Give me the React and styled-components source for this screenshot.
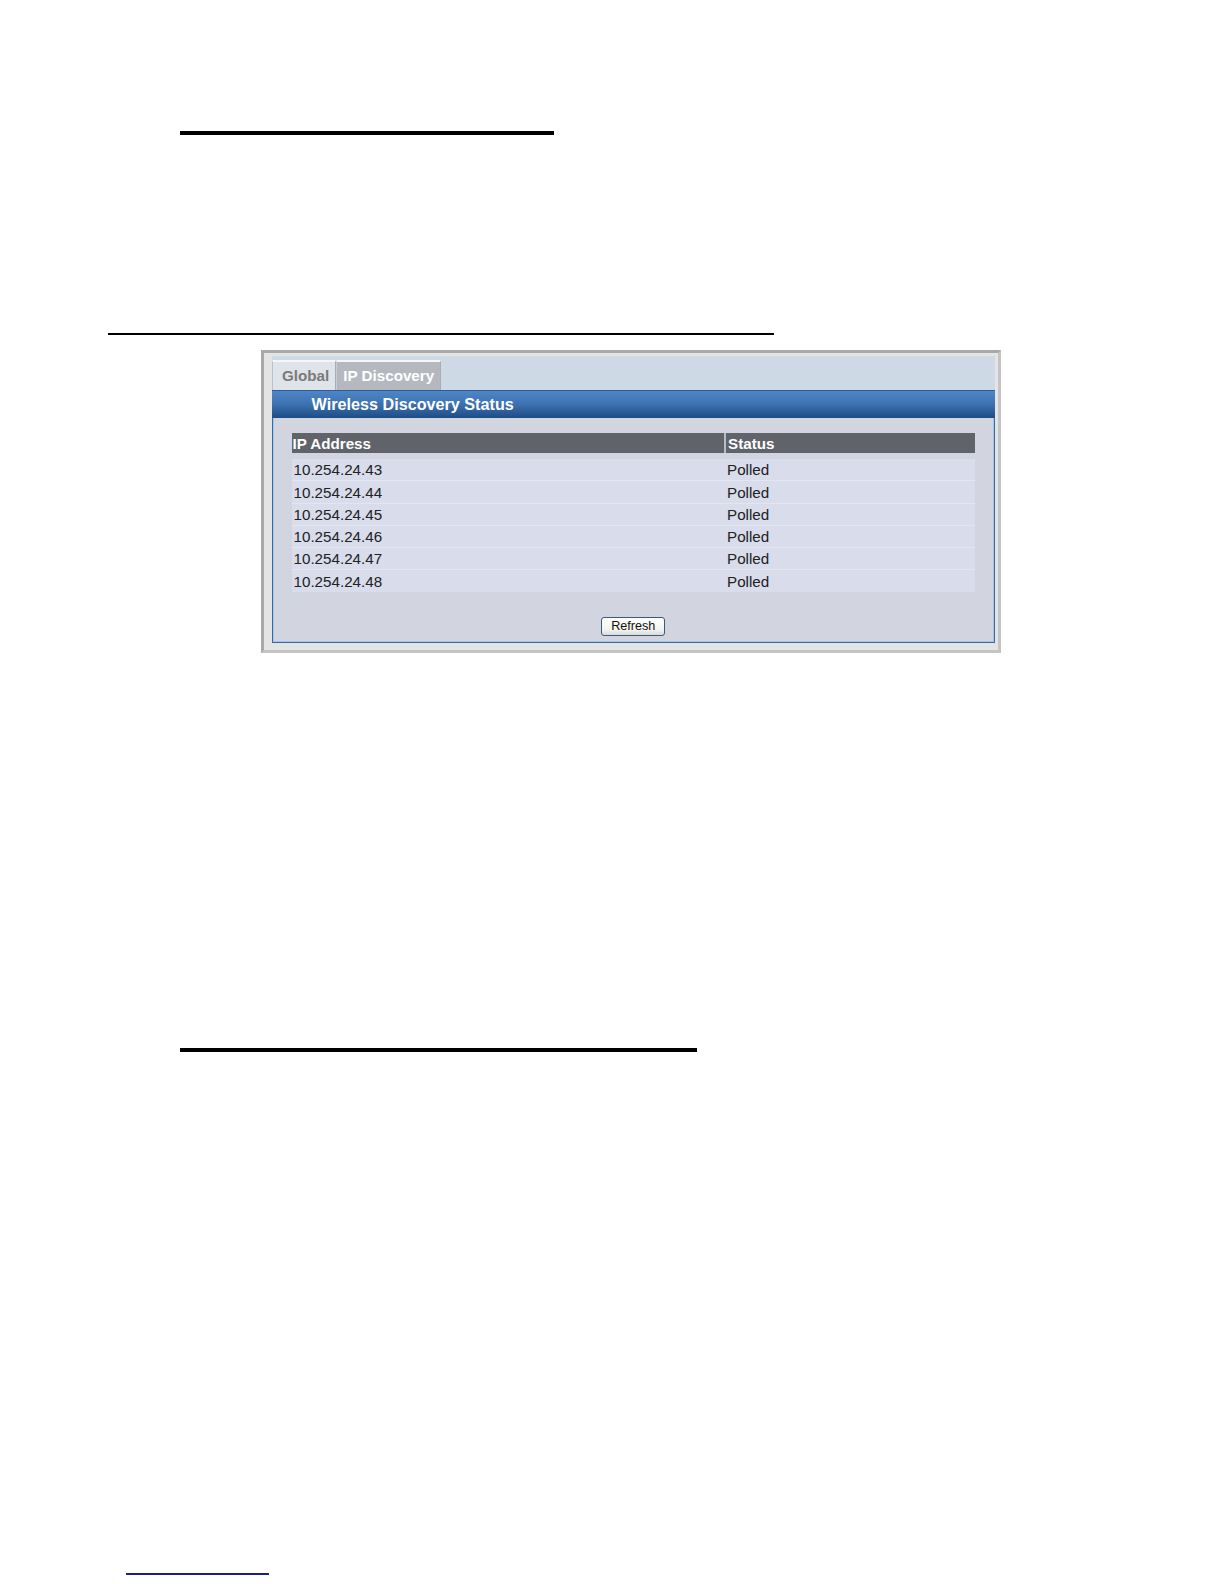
import styled, { createGlobalStyle } from "styled-components";

const rows = [
  { ip: "10.254.24.43", status: "Polled" },
  { ip: "10.254.24.44", status: "Polled" },
  { ip: "10.254.24.45", status: "Polled" },
  { ip: "10.254.24.46", status: "Polled" },
  { ip: "10.254.24.47", status: "Polled" },
  { ip: "10.254.24.48", status: "Polled" },
];

export default function App() {
  return (
    <Page>
      <GlobalStyle />
      <Rule $top={131} $left={180} $width={374} $height={4} />
      <Rule $top={198} $left={108} $width={666} $height={1.5} />
      <Frame>
        <TabBar>
          <Tab>Global</Tab>
          <Tab $active>IP Discovery</Tab>
        </TabBar>
        <Header>Wireless Discovery Status</Header>
        <Body>
          <Table>
            <HeadRow>
              <HeadCell $first>IP Address</HeadCell>
              <HeadCell>Status</HeadCell>
            </HeadRow>
            <Rows>
              {rows.map((r) => (
                <Row key={r.ip}>
                  <Cell $first>{r.ip}</Cell>
                  <Cell>{r.status}</Cell>
                </Row>
              ))}
            </Rows>
          </Table>
          <ButtonBar>
            <Button>Refresh</Button>
          </ButtonBar>
        </Body>
      </Frame>
      <Rule $top={395} $left={180} $width={517} $height={4} />
      <Rule $top={521.5} $left={126} $width={143} $height={2} $color="#1c1c8c" />
    </Page>
  );
}

const GlobalStyle = createGlobalStyle`
html, body{
  margin: 0;
  background: #ffffff;
  font-family: "Liberation Sans", Arial, sans-serif;
  overflow: hidden;
}
`

const Page = styled.div`
padding-top: 0.1px;
`

const Rule = styled.div`
margin-top: ${(p) => p.$top}px;
margin-left: ${(p) => p.$left}px;
width: ${(p) => p.$width}px;
height: ${(p) => p.$height}px;
background: ${(p) => p.$color || "#000"};
`

const Frame = styled.div`
margin-top: 15px;
margin-left: 261px;
width: 740px;
height: 303px;
box-sizing: border-box;
border: 3px solid #a9a9a9;
border-right-color: #c4c4c4;
border-bottom-color: #c4c4c4;
background: #e4e4e4;
padding: 3px 3px 7px 8px;
display: flex;
flex-direction: column;
`

const TabBar = styled.div`
height: 34.5px;
flex-shrink: 0;
background: #cddae5;
display: flex;
align-items: flex-end;
padding-left: 0;
`

const Tab = styled.div`
height: 30.5px;
box-sizing: border-box;
display: flex;
align-items: center;
padding: 0 ${(p) => (p.$active ? "6px" : "6px")} 0 ${(p) => (p.$active ? "6px" : "9px")};
font-size: 15.2px;
font-weight: bold;
color: ${(p) => (p.$active ? "#ffffff" : "#7a7a7a")};
background: ${(p) => (p.$active ? "#b5b8bf" : "#dfe3ea")};
border-top: 2px solid #f4f6f8;
border-left: 1px solid ${(p) => (p.$active ? "#c9ccd2" : "#b9c1c9")};
border-right: 1px solid #a8adb5;
`

const Header = styled.div`
height: 27.5px;
flex-shrink: 0;
box-sizing: border-box;
display: flex;
align-items: center;
padding-left: 39.5px;
font-size: 16.2px;
font-weight: bold;
color: #ffffff;
background: linear-gradient(to bottom, #4f86c6 0%, #3f74b4 45%, #1e4c85 100%);
border-top: 1px solid #2a5d98;
`

const Body = styled.div`
flex: 1;
box-sizing: border-box;
background: #d2d5e0;
border: 1px solid #2e6cab;
border-top: none;
box-shadow: inset 1px 0 0 #a9c6e4, inset -1px 0 0 #a9c6e4, inset 0 -1px 0 #a9c6e4;
padding: 15.5px 19px 0 18.5px;
display: flex;
flex-direction: column;
`

const Table = styled.div`
width: 683px;
`

const HeadRow = styled.div`
display: grid;
grid-template-columns: 432.5px 1fr;
height: 20.2px;
background: #606369;
`

const HeadCell = styled.div`
display: flex;
align-items: center;
padding-left: ${(p) => (p.$first ? "1px" : "2px")};
font-size: 15.2px;
font-weight: bold;
color: #ffffff;
border-left: ${(p) => (p.$first ? "none" : "2px solid #b8bcc4")};
`

const Rows = styled.div`
margin-top: 6px;
background: #d8dceb;
`

const Row = styled.div`
display: grid;
grid-template-columns: 432.5px 1fr;
height: 22.2px;
border-bottom: 1px solid #e3e6f0;
box-sizing: border-box;
&:last-child{
  border-bottom: none;
}
`

const Cell = styled.div`
display: flex;
align-items: center;
padding-left: ${(p) => (p.$first ? "2px" : "3px")};
font-size: 15.2px;
color: #222222;
`

const ButtonBar = styled.div`
display: flex;
justify-content: center;
margin-top: 24.5px;
`

const Button = styled.button`
height: 19.5px;
padding: 0 9px;
font-family: "Liberation Sans", Arial, sans-serif;
font-size: 12.6px;
color: #111;
background: linear-gradient(to bottom, #ffffff 0%, #f2f2ee 70%, #dcdcd6 100%);
border: 1px solid #3c5a7c;
border-radius: 3px;
line-height: 1;
`
